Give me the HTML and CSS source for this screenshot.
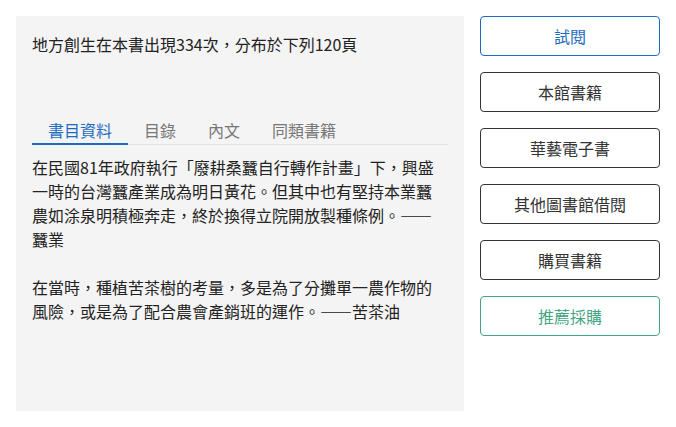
FILE: index.html
```html
<!DOCTYPE html>
<html lang="zh-Hant">
<head>
<meta charset="utf-8">
<link rel="stylesheet" href="styles.css">
</head>
<body>
<div class="layout">
  <section class="panel">
    <p class="summary">地方創生在本書出現334次，分布於下列120頁</p>
    <nav class="tabs">
      <span class="tab active">書目資料</span>
      <span class="tab">目錄</span>
      <span class="tab">內文</span>
      <span class="tab">同類書籍</span>
    </nav>
    <div class="content">
      <p>在民國81年政府執行「廢耕桑蠶自行轉作計畫」下，興盛一時的台灣蠶產業成為明日黃花。但其中也有堅持本業蠶農如涂泉明積極奔走，終於換得立院開放製種條例。——蠶業</p>
      <p>在當時，種植苦茶樹的考量，多是為了分攤單一農作物的風險，或是為了配合農會產銷班的運作。——苦茶油</p>
    </div>
  </section>
  <aside class="actions">
    <a class="btn btn-blue">試閱</a>
    <a class="btn">本館書籍</a>
    <a class="btn">華藝電子書</a>
    <a class="btn">其他圖書館借閱</a>
    <a class="btn">購買書籍</a>
    <a class="btn btn-green">推薦採購</a>
  </aside>
</div>
</body>
</html>
```

FILE: styles.css
```css
* { box-sizing: border-box; }
html, body { margin: 0; padding: 0; background: #fff; }
body {
  font-family: "Noto Sans CJK TC", "Noto Sans", sans-serif;
  font-size: 16px;
  line-height: 24px;
  color: #222;
}
.layout {
  display: flex;
  gap: 16px;
  padding: 16px;
  align-items: flex-start;
}
.panel {
  width: 448px;
  height: 395px;
  background: #f4f4f4;
  padding: 16px;
}
.summary { margin: 0; }
.tabs {
  display: flex;
  margin-top: 56px;
  border-bottom: 1px solid #e2e2e2;
}
.tab {
  padding: 6px 16px 1px;
  color: #777;
  border-bottom: 2px solid transparent;
  margin-bottom: -1px;
}
.tab.active {
  color: #1d6bc1;
  border-bottom-color: #1d6bc1;
}
.content { padding-top: 10px; width: 408px; }
.content p { margin: 0 0 24px; }
.actions {
  display: flex;
  flex-direction: column;
  gap: 16px;
  width: 180px;
}
.btn {
  display: flex;
  align-items: center;
  justify-content: center;
  height: 40px;
  border: 1px solid #333;
  border-radius: 4px;
  color: #333;
  background: #fff;
  text-decoration: none;
}
.btn-blue { border-color: #1d6bc1; color: #1d6bc1; }
.btn-green { border-color: #45a583; color: #45a583; }
```
